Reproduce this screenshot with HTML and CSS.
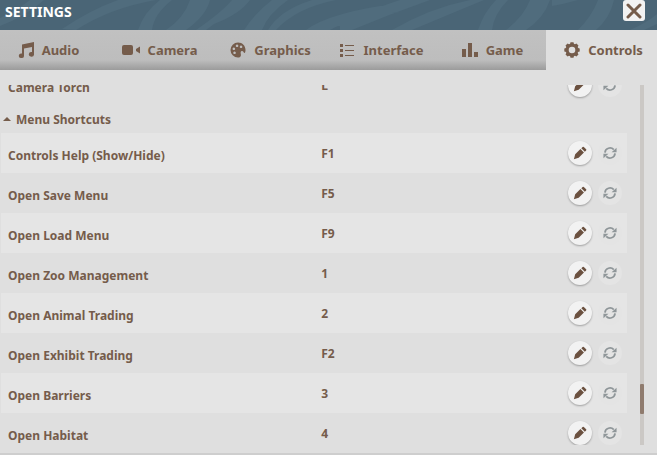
FILE: index.html
```html
<!DOCTYPE html>
<html lang="en">
<head>
    <meta charset="UTF-8">
    <meta name="viewport" content="width=device-width, initial-scale=1.0">
    <title>Settings</title>
    <link rel="stylesheet" href="styles.css">
</head>
<body>
    <!-- shared row icons -->
    <svg class="sprite" aria-hidden="true">
        <symbol id="icon-edit" viewBox="0 0 16 16">
            <path d="M1 15l1.500-5.500L8.500 3.500l4 4-6 6zM9.500 2.500l1.500-1.400q.7-.6 1.400 0l2.600 2.600q.6.700 0 1.400L13.500 6.500z"/>
        </symbol>
        <symbol id="icon-reset" viewBox="0 0 16 16">
            <path d="M2.200 7.500A5.800 5.800 0 0 1 12.300 4.200M13.800 8.500A5.800 5.800 0 0 1 3.700 11.800" fill="none" stroke="currentColor" stroke-width="2"/>
            <path d="M15.500 2v5.200h-5.700zM.5 14V8.800h5.700z"/>
        </symbol>
    </svg>

    <header class="titlebar">
        <svg class="stripes" viewBox="0 0 657 30" preserveAspectRatio="none" aria-hidden="true">
            <path d="M0 18Q20 8 30 0h14Q26 16 0 26zM62 29Q90 10 118 0h38Q110 8 76 30zM138 30Q144 12 160 0h12Q154 14 152 30zM166 30Q184 18 190 0h20Q206 16 186 30zM196 30Q222 12 232 0h18Q240 14 214 24L206 30zM244 30Q256 12 272 0h16Q268 14 262 30zM268 30Q280 10 312 0h24Q296 8 276 30zM306 30Q330 12 400 3v9Q350 18 330 30zM340 24Q380 6 400 0h30Q390 14 352 30h-12zM392 30Q430 8 470 0h14Q450 14 412 30zM478 30Q484 12 496 0h12Q494 14 492 30zM506 30Q524 16 530 0h20Q544 18 526 30zM552 6V0h26Q564 4 552 6zM578 30Q592 16 598 0h16Q610 18 596 30zM630 30Q648 22 657 14v10L644 30z"/>
        </svg>
        <h1>SETTINGS</h1>
        <button class="close" aria-label="Close">
            <svg viewBox="0 0 16 16"><path d="M2 2l12 12M14 2L2 14"/></svg>
        </button>
    </header>

    <nav class="tabs">
        <button class="tab">
            <svg viewBox="0 0 16 16"><path d="M4 2.500L16 0v12.200a2.600 2.300 0 1 1-2-2.100V5L6 6.600v7a2.600 2.300 0 1 1-2-2.100z"/></svg>
            Audio
        </button>
        <button class="tab">
            <svg class="wide" viewBox="0 0 18 16"><rect y="3" width="11" height="10" rx="2"/><path d="M18 4.500v7l-4-2.500v-2z"/></svg>
            Camera
        </button>
        <button class="tab">
            <svg viewBox="0 0 16 16"><path fill-rule="evenodd" d="M8 .5C12.500.5 15.500 4 15.500 8c0 1.500-.3 3-1 3s-1-2-2.500-2-1.500 1.500-1.200 3 .2 3.500-2.800 3.500A7.500 7.500 0 0 1 8 .5zM7 2.500a1.300 1.300 0 1 0 .1 0zM11 3.500a1.300 1.300 0 1 0 .1 0zM3.800 5.500a1.300 1.300 0 1 0 .1 0zM4.500 9.500a1.300 1.300 0 1 0 .1 0z"/></svg>
            Graphics
        </button>
        <button class="tab">
            <svg viewBox="0 0 16 16"><path d="M1 2h3v3H1zM1 7h3v3H1zM1 12h3v3H1zM6 3h9v1H6zM6 8h9v1H6zM6 13h9v1H6z"/></svg>
            Interface
        </button>
        <button class="tab">
            <svg viewBox="0 0 16 16"><path d="M0 7h4v8H0zM6 1h4v14H6zM12 10h4v5h-4z"/></svg>
            Game
        </button>
        <button class="tab active">
            <svg viewBox="0 0 16 16">
                <circle cx="8" cy="8" r="4.900" fill="none" stroke="currentColor" stroke-width="3.200"/>
                <path d="M6.500.3h3l.5 2H6zM6.500 15.700h3l.5-2H6zM.3 6.500v3l2 .5V6zM15.700 6.500v3l-2 .5V6zM1.500 3.600l2.100-2.100 1.800 1.100-2.800 2.800zM14.500 3.600l-2.100-2.100-1.800 1.100 2.800 2.800zM1.500 12.400l2.100 2.100 1.800-1.100-2.800-2.800zM14.500 12.400l-2.100 2.100-1.800-1.100 2.800-2.800z"/>
            </svg>
            Controls
        </button>
    </nav>

    <main class="panel">
        <div class="list">
            <table class="bindings">
                <tbody>
                    <tr>
                        <th scope="row">Camera Torch</th>
                        <td>L</td>
                        <td class="actions">
                            <button class="round" aria-label="Edit"><svg><use href="#icon-edit"/></svg></button>
                            <button class="round reset" aria-label="Reset"><svg><use href="#icon-reset"/></svg></button>
                        </td>
                    </tr>
                </tbody>
                <tbody>
                    <tr class="group">
                        <th colspan="3" scope="rowgroup"><button class="toggle"><span class="caret"></span>Menu Shortcuts</button></th>
                    </tr>
                    <tr>
                        <th scope="row">Controls Help (Show/Hide)</th>
                        <td>F1</td>
                        <td class="actions">
                            <button class="round" aria-label="Edit"><svg><use href="#icon-edit"/></svg></button>
                            <button class="round reset" aria-label="Reset"><svg><use href="#icon-reset"/></svg></button>
                        </td>
                    </tr>
                    <tr>
                        <th scope="row">Open Save Menu</th>
                        <td>F5</td>
                        <td class="actions">
                            <button class="round" aria-label="Edit"><svg><use href="#icon-edit"/></svg></button>
                            <button class="round reset" aria-label="Reset"><svg><use href="#icon-reset"/></svg></button>
                        </td>
                    </tr>
                    <tr>
                        <th scope="row">Open Load Menu</th>
                        <td>F9</td>
                        <td class="actions">
                            <button class="round" aria-label="Edit"><svg><use href="#icon-edit"/></svg></button>
                            <button class="round reset" aria-label="Reset"><svg><use href="#icon-reset"/></svg></button>
                        </td>
                    </tr>
                    <tr>
                        <th scope="row">Open Zoo Management</th>
                        <td>1</td>
                        <td class="actions">
                            <button class="round" aria-label="Edit"><svg><use href="#icon-edit"/></svg></button>
                            <button class="round reset" aria-label="Reset"><svg><use href="#icon-reset"/></svg></button>
                        </td>
                    </tr>
                    <tr>
                        <th scope="row">Open Animal Trading</th>
                        <td>2</td>
                        <td class="actions">
                            <button class="round" aria-label="Edit"><svg><use href="#icon-edit"/></svg></button>
                            <button class="round reset" aria-label="Reset"><svg><use href="#icon-reset"/></svg></button>
                        </td>
                    </tr>
                    <tr>
                        <th scope="row">Open Exhibit Trading</th>
                        <td>F2</td>
                        <td class="actions">
                            <button class="round" aria-label="Edit"><svg><use href="#icon-edit"/></svg></button>
                            <button class="round reset" aria-label="Reset"><svg><use href="#icon-reset"/></svg></button>
                        </td>
                    </tr>
                    <tr>
                        <th scope="row">Open Barriers</th>
                        <td>3</td>
                        <td class="actions">
                            <button class="round" aria-label="Edit"><svg><use href="#icon-edit"/></svg></button>
                            <button class="round reset" aria-label="Reset"><svg><use href="#icon-reset"/></svg></button>
                        </td>
                    </tr>
                    <tr>
                        <th scope="row">Open Habitat</th>
                        <td>4</td>
                        <td class="actions">
                            <button class="round" aria-label="Edit"><svg><use href="#icon-edit"/></svg></button>
                            <button class="round reset" aria-label="Reset"><svg><use href="#icon-reset"/></svg></button>
                        </td>
                    </tr>
                </tbody>
            </table>
        </div>
        <div class="scrollbar"><div class="thumb"></div></div>
    </main>
</body>
</html>
```

FILE: styles.css
```css
* {
    box-sizing: border-box;
}
body {
    margin: 0;
    height: 100vh;
    display: flex;
    flex-direction: column;
    overflow: hidden;
    font-family: "Noto Sans", sans-serif;
    font-size: 12px;
    font-weight: bold;
    color: #755c4b;
    background: #dfdfdf;
    border-bottom: 2px solid #cecece;
}
button {
    font: inherit;
    color: inherit;
    border: none;
    padding: 0;
    background: none;
    cursor: pointer;
}
svg {
    fill: currentColor;
}
.sprite {
    display: none;
}

/* title bar */
.titlebar {
    position: relative;
    flex: none;
    height: 30px;
    display: flex;
    justify-content: space-between;
    padding: 0 12px 0 5px;
    background: #4a6576;
}
.stripes {
    position: absolute;
    top: 0;
    left: 0;
    width: 100%;
    height: 100%;
    fill: #506c7d;
}
.titlebar h1 {
    position: relative;
    margin: 0;
    font-size: 14px;
    line-height: 24px;
    color: #fff;
}
.close {
    position: relative;
    width: 22px;
    height: 21px;
    display: flex;
    align-items: center;
    justify-content: center;
    background: #f2f2f2;
    border-radius: 3px;
}
.close svg {
    width: 16px;
    height: 16px;
    stroke: #755c4b;
    stroke-width: 3;
    stroke-linecap: round;
}

/* tabs */
.tabs {
    flex: none;
    display: flex;
    height: 40px;
    margin-left: -9px;
}
.tab {
    flex: 1;
    display: flex;
    align-items: center;
    justify-content: center;
    gap: 8px;
    padding-left: 4px;
    font-size: 13px;
    background: linear-gradient(#c1c1c1 0, #bdbdbd 75%, #9b9b9b 100%);
}
.tab svg {
    width: 16px;
    height: 16px;
}
.tab .wide {
    width: 18px;
}
.tab.active {
    background: #dfdfdf;
}

/* key bindings */
.panel {
    flex: 1;
    min-height: 0;
    display: flex;
    gap: 13px;
    padding: 15px 13px 8px 1px;
}
.list {
    flex: 1;
    overflow: hidden;
}
/* list is scrolled half a row down */
.bindings {
    width: 100%;
    margin-top: -20px;
    border-collapse: collapse;
    table-layout: fixed;
}
.bindings tr {
    height: 40px;
}
.bindings tr:nth-child(even) {
    background: #e5e5e5;
}
.bindings th {
    width: 51%;
    padding: 4px 0 0 7px;
    text-align: left;
}
.bindings td {
    padding: 0 0 0 1px;
}
.bindings .group {
    height: 28px;
}
.bindings .group th {
    padding: 0 0 0 2px;
}
.toggle {
    display: flex;
    align-items: center;
    gap: 5px;
}
.caret {
    border: 4px solid transparent;
    border-top: none;
    border-bottom-color: #755c4b;
}
.bindings .actions {
    text-align: right;
    padding-right: 5px;
}
.round {
    display: inline-flex;
    align-items: center;
    justify-content: center;
    width: 24px;
    height: 24px;
    margin-left: 3px;
    vertical-align: middle;
    border-radius: 50%;
    color: #6b5140;
    background: #f2f2f2;
    box-shadow: 0 1px 2px rgba(0, 0, 0, 0.3);
}
.round svg {
    width: 14px;
    height: 14px;
}
.round.reset {
    color: #8f9699;
    background: #e4e4e4;
    box-shadow: none;
}

/* scrollbar */
.scrollbar {
    position: relative;
    width: 4px;
    background: #cbc8c5;
}
.thumb {
    position: absolute;
    top: 83%;
    width: 100%;
    height: 30px;
    border-radius: 1px;
    background: #8f7b6e;
}
```
